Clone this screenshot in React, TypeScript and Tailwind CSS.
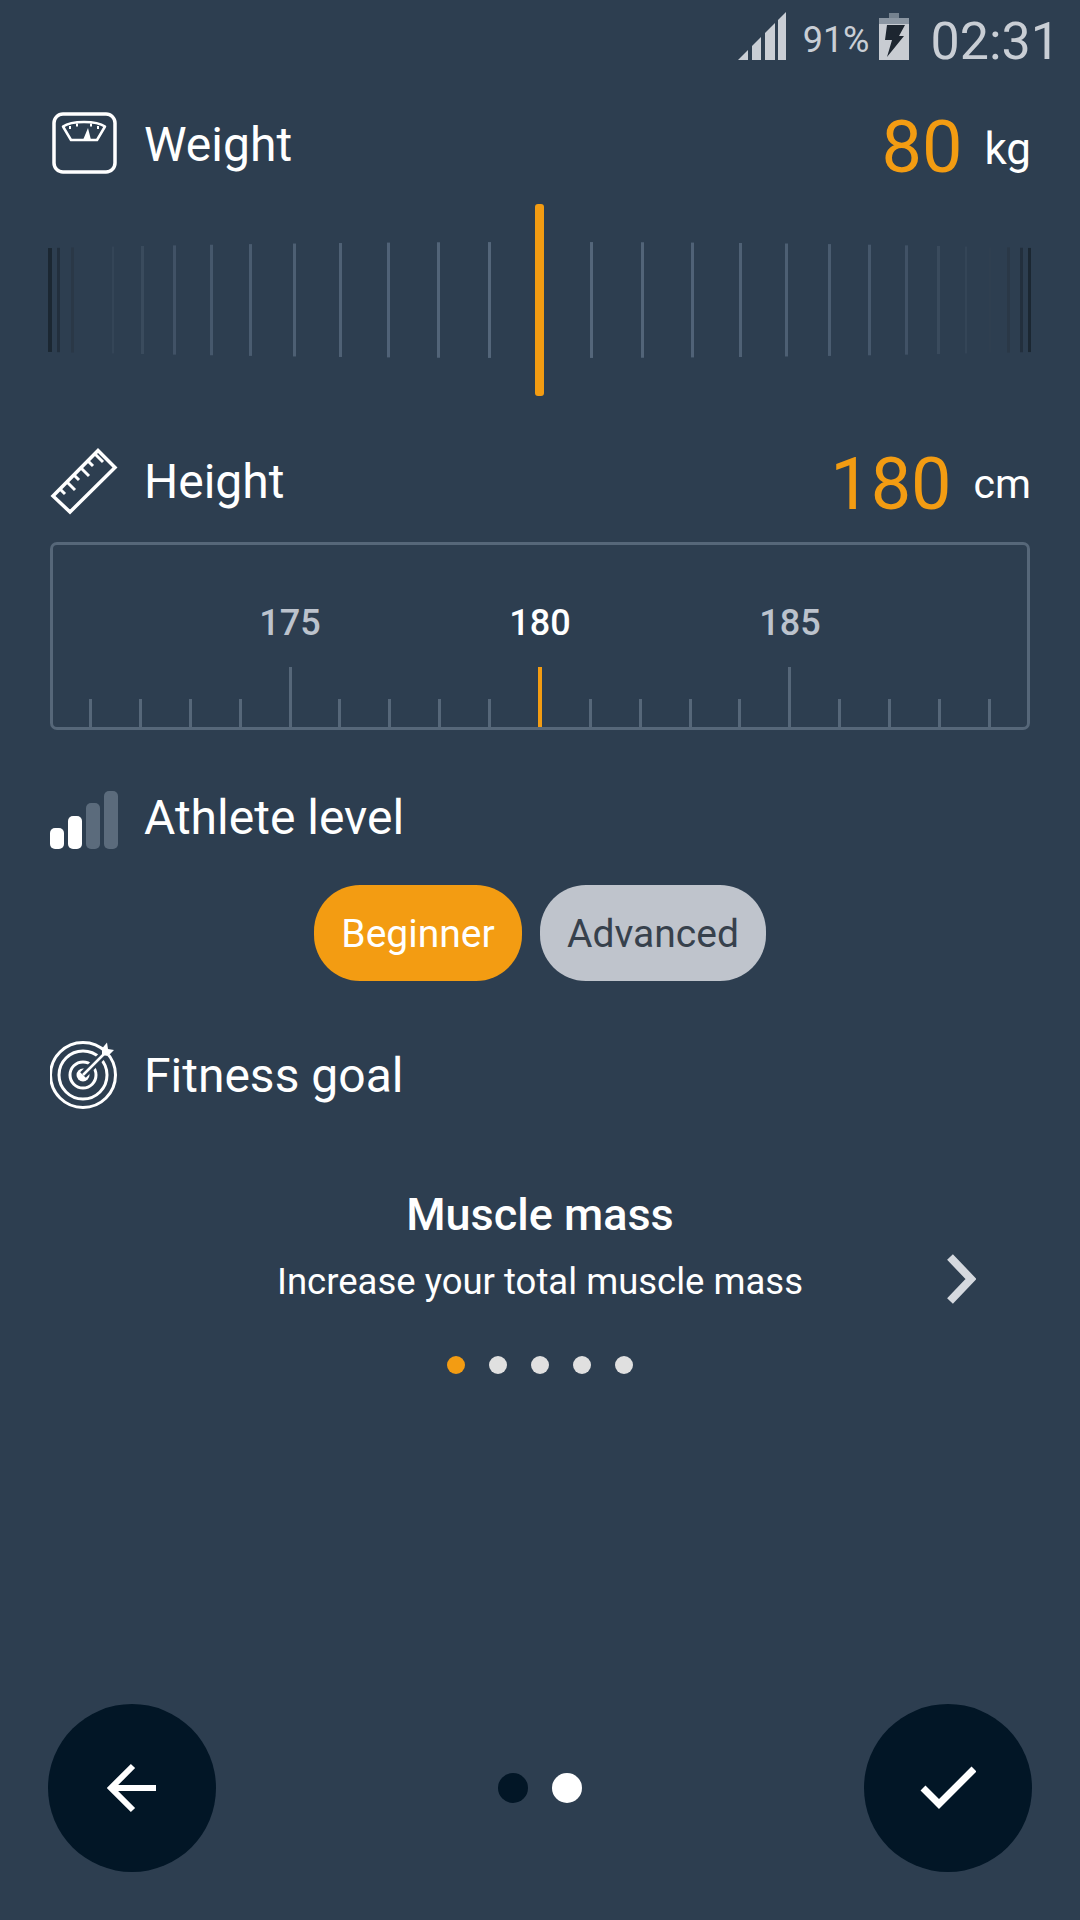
const ROBOTO = "font-['Roboto','Liberation_Sans',sans-serif]";

// wheel ruler: [x, colour, width] in px from the left edge of the 1080 wide page
const wheelLines: [number, string, number][] = [
  [48, '#1b2732', 4], [57, '#222f3d', 3], [71, '#2a3847', 3], [112, '#344557', 2], [141, '#3a4b5d', 3],
  [173, '#415266', 3], [210, '#46586c', 3], [249, '#4a5c70', 3], [293, '#4d5f73', 3], [339, '#4f6175', 3],
  [387, '#506277', 3], [437, '#526478', 3], [488, '#54667a', 3],
  [590, '#54667a', 3], [641, '#526478', 3], [691, '#506277', 3], [739, '#4f6175', 3], [785, '#4d5f73', 3],
  [828, '#4a5c70', 3], [868, '#46586c', 3], [905, '#415266', 3], [937, '#3a4b5d', 3], [965, '#344557', 2],
  [989, '#2f3f50', 2], [1007, '#2a3847', 3], [1020, '#222f3d', 3], [1028, '#1b2732', 3],
];

const ticks = Array.from({ length: 19 }, (_, i) => 90 + i * 50);

function ScaleIcon() {
  return (
    <svg width="68" height="68" viewBox="0 0 68 68" fill="none" className="shrink-0">
      <rect x="4" y="3" width="61" height="58" rx="9" stroke="white" strokeWidth="3.5" />
      <path d="M13 15.5C18 12 25 11 34 11C43 11 50 12 55 15.5L47 29H21Z" stroke="white" strokeWidth="2.5" strokeLinejoin="round" />
      <path d="M33 29L38 17L41 29Z" fill="white" />
      <path d="M20 15V18M27 12.5V15.5M41 12.5V15.5M48 15V18" stroke="white" strokeWidth="2" />
    </svg>
  );
}

function RulerIcon() {
  return (
    <svg width="70" height="70" viewBox="0 0 70 70" fill="none" className="shrink-0">
      <path d="M3 49L48 3.5L65 20.5L20 65Z" stroke="white" strokeWidth="3.5" strokeLinejoin="miter" />
      <path d="M10 42L15 47M17 35L25 43M24 28L29 33M31 21L39 29M38 14L43 19M45 7L53 15" stroke="white" strokeWidth="3" />
    </svg>
  );
}

function LevelIcon() {
  return (
    <div className="mt-[3px] flex items-end gap-[4px] h-[58px] w-[68px] shrink-0">
      <div className="w-[14px] h-[21px] rounded-[5px] bg-white" />
      <div className="w-[14px] h-[33px] rounded-[5px] bg-white" />
      <div className="w-[14px] h-[46px] rounded-[5px] bg-[#5b6b7c]" />
      <div className="w-[14px] h-[58px] rounded-[5px] bg-[#5b6b7c]" />
    </div>
  );
}

function TargetIcon() {
  return (
    <svg width="70" height="70" viewBox="0 0 70 70" fill="none" className="shrink-0">
      <circle cx="33" cy="34" r="32.5" stroke="white" strokeWidth="3" />
      <circle cx="33" cy="34" r="24" stroke="white" strokeWidth="3" />
      <circle cx="33" cy="34" r="13" stroke="white" strokeWidth="3" />
      <circle cx="33" cy="34" r="6.5" fill="white" />
      <path d="M33 34L60 7" stroke="#2d3e50" strokeWidth="8" />
      <path d="M33 34L58 9" stroke="white" strokeWidth="2.5" />
      <path d="M52 7.5L57 1.5L58 8L64 9L58 15L52 14Z" fill="white" />
    </svg>
  );
}

function SignalIcon() {
  return (
    <svg width="48" height="48" viewBox="0 0 48 48" fill="#c9ced5" className="shrink-0">
      <path d="M0 48L10 38V48Z" />
      <path d="M14 34L23 25V48H14Z" />
      <path d="M27 21L37 11V48H27Z" />
      <path d="M40 8L48 0V48H40Z" />
    </svg>
  );
}

function BatteryIcon() {
  return (
    <svg width="30" height="48" viewBox="0 0 30 48" className="shrink-0">
      <rect x="10" y="0" width="10" height="6" fill="#75828f" />
      <rect x="0" y="5" width="30" height="6" fill="#8b96a2" />
      <rect x="0" y="11" width="30" height="36" fill="#c8ccd2" />
      <path d="M8 12H26L20 23H25L8 44L13 27H6Z" fill="#1d2630" />
    </svg>
  );
}

function SectionRow({ icon, label, children, className }: { icon: React.ReactNode; label: string; children?: React.ReactNode; className?: string }) {
  return (
    <div className={`flex items-center ${className ?? ''}`}>
      <div className="w-[94px] flex items-center">{icon}</div>
      <span className="text-[48px] leading-[54px] text-white">{label}</span>
      {children && <div className="ml-auto -mr-[1px] mt-[6px] flex items-center">{children}</div>}
    </div>
  );
}

export default function App() {
  return (
    <div className={`${ROBOTO} w-[1080px] h-[1920px] bg-[#2d3e50] flex flex-col overflow-hidden`}>
      {/* status bar */}
      <div className="h-[76px] flex items-start justify-end pr-[20px] pt-[12px] shrink-0">
        <SignalIcon />
        <span className="ml-[17px] mt-[8px] text-[36px] leading-[40px] text-[#c9ced5]">91%</span>
        <div className="ml-[9px] mt-[1px]"><BatteryIcon /></div>
        <span className="ml-[22px] mt-[6px] text-[52px] leading-[48px] text-[#c9ced5]">02:31</span>
      </div>

      <div className="px-[50px] shrink-0">
        <SectionRow icon={<ScaleIcon />} label="Weight" className="h-[70px] mt-[34px]">
          <span className="text-[72px] leading-[70px] text-[#f39c12]">80</span>
          <span className="ml-[22px] mt-[2px] text-[44px] leading-[44px] text-white">kg</span>
        </SectionRow>
      </div>

      {/* weight wheel */}
      <svg width="1080" height="192" viewBox="0 0 1080 192" className="mt-[24px] shrink-0">
        {wheelLines.map(([x, color, w]) => {
          const d = Math.abs(x - 540) / 490;
          const inset = 38 + 6 * d * d;
          return <rect key={x} x={x} y={inset} width={w} height={192 - inset * 2} fill={color} />;
        })}
        <rect x="535" y="0" width="9" height="192" rx="3" fill="#f39c12" />
      </svg>

      <div className="px-[50px] shrink-0">
        <SectionRow icon={<RulerIcon />} label="Height" className="h-[70px] mt-[51px]">
          <span className="text-[72px] leading-[70px] text-[#f39c12]">180</span>
          <span className="ml-[22px] -mt-[2px] text-[41px] leading-[44px] text-white">cm</span>
        </SectionRow>

        {/* height ruler */}
        <div className="mt-[25px] h-[188px] border-[3px] border-[#566779] rounded-[7px] flex flex-col justify-end">
          <div className="flex justify-center mb-[23px]">
            {['175', '180', '185'].map((n) => (
              <span key={n} className={`w-[250px] text-center text-[36px] leading-[42px] font-medium ${n === '180' ? 'text-white' : 'text-[#bcc3cd]'}`}>
                {n}
              </span>
            ))}
          </div>
          <div className="flex items-end justify-between px-[36px] h-[60px]">
            {ticks.map((x) => {
              const center = x === 540;
              const major = x === 290 || x === 790 || center;
              return (
                <div
                  key={x}
                  className={`${center ? 'w-[4px] bg-[#f39c12]' : 'w-[3px] bg-[#566779]'} ${major ? 'h-[60px]' : 'h-[28px]'}`}
                />
              );
            })}
          </div>
        </div>

        <SectionRow icon={<LevelIcon />} label="Athlete level" className="h-[70px] mt-[53px]" />
      </div>

      <div className="mt-[32px] flex justify-center gap-[18px] shrink-0">
        <div className="h-[96px] w-[208px] pt-[3px] rounded-[46px] bg-[#f39c12] flex items-center justify-center text-[39px] text-white">Beginner</div>
        <div className="h-[96px] w-[226px] pt-[3px] rounded-[46px] bg-[#bfc4cc] flex items-center justify-center text-[39px] text-[#37414c]">Advanced</div>
      </div>

      <div className="px-[50px] shrink-0">
        <SectionRow icon={<TargetIcon />} label="Fitness goal" className="h-[70px] mt-[60px]" />
      </div>

      {/* goal carousel */}
      <div className="relative mt-[78px] flex flex-col items-center shrink-0">
        <span className="text-[45px] leading-[52px] font-medium text-white">Muscle mass</span>
        <span className="mt-[19px] text-[36.5px] leading-[44px] text-white">Increase your total muscle mass</span>
        <svg width="30" height="52" viewBox="0 0 30 52" fill="none" className="absolute left-[946px] top-[64px]">
          <path d="M4 4L25 26L4 48" stroke="#d5d9df" strokeWidth="8" />
        </svg>
        <div className="mt-[52px] flex gap-[24px]">
          <div className="w-[18px] h-[18px] rounded-full bg-[#f39c12]" />
          <div className="w-[18px] h-[18px] rounded-full bg-[#e0e0e0]" />
          <div className="w-[18px] h-[18px] rounded-full bg-[#e0e0e0]" />
          <div className="w-[18px] h-[18px] rounded-full bg-[#e0e0e0]" />
          <div className="w-[18px] h-[18px] rounded-full bg-[#e0e0e0]" />
        </div>
      </div>

      {/* bottom nav */}
      <div className="mt-auto mb-[48px] px-[48px] flex items-center justify-between">
        <div className="w-[168px] h-[168px] rounded-full bg-[#021626] flex items-center justify-center">
          <svg width="52" height="52" viewBox="0 0 52 52" fill="none">
            <path d="M50 26H6M27 4L5 26L27 48" stroke="white" strokeWidth="6" />
          </svg>
        </div>
        <div className="flex gap-[24px] items-center">
          <div className="w-[30px] h-[30px] rounded-full bg-[#021626]" />
          <div className="w-[30px] h-[30px] rounded-full bg-white" />
        </div>
        <div className="w-[168px] h-[168px] rounded-full bg-[#021626] flex items-center justify-center">
          <svg width="56" height="44" viewBox="0 0 56 44" fill="none">
            <path d="M3 22L19 38L54 3" stroke="white" strokeWidth="7" />
          </svg>
        </div>
      </div>
    </div>
  );
}
